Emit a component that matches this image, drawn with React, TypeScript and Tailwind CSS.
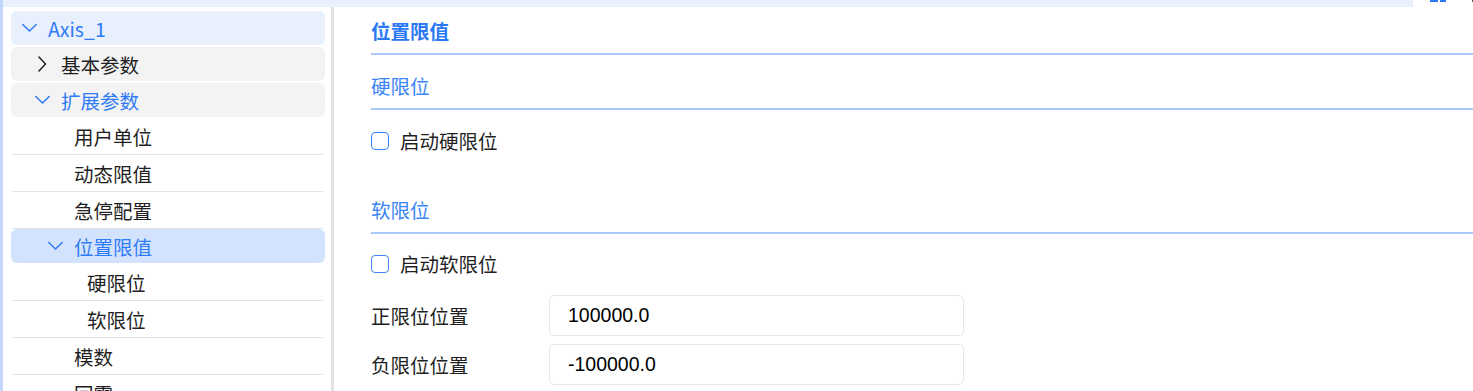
import { ReactNode } from 'react';

type Row = {
  label: string;
  level: number;
  icon: 'down' | 'right' | 'none';
  kind: 'axis' | 'group' | 'groupOpen' | 'active' | 'plain';
  gap?: string;
};

const rows: Row[] = [
  { label: 'Axis_1', level: 0, icon: 'down', kind: 'axis', gap: 'mb-[2px]' },
  { label: '基本参数', level: 1, icon: 'right', kind: 'group', gap: 'mb-[2px]' },
  { label: '扩展参数', level: 1, icon: 'down', kind: 'groupOpen', gap: 'mb-px' },
  { label: '用户单位', level: 2, icon: 'none', kind: 'plain' },
  { label: '动态限值', level: 2, icon: 'none', kind: 'plain' },
  { label: '急停配置', level: 2, icon: 'none', kind: 'plain' },
  { label: '位置限值', level: 2, icon: 'down', kind: 'active', gap: 'mb-px' },
  { label: '硬限位', level: 3, icon: 'none', kind: 'plain' },
  { label: '软限位', level: 3, icon: 'none', kind: 'plain' },
  { label: '模数', level: 2, icon: 'none', kind: 'plain' },
  { label: '回零', level: 2, icon: 'none', kind: 'plain' },
];

const indent = ['pl-[11px]', 'pl-[24px]', 'pl-[37px]', 'pl-[50px]'];
const plainIndent = ['pl-[10px]', 'pl-[23px]', 'pl-[36px]', 'pl-[49px]'];

function Chevron({ dir, color }: { dir: 'down' | 'right' | 'none'; color: string }) {
  if (dir === 'none') return <span className="w-4 shrink-0" />;
  return (
    <svg width="16" height="16" viewBox="0 0 16 16" className="shrink-0" fill="none" stroke={color} strokeWidth="1.5" strokeLinecap="round" strokeLinejoin="round">
      {dir === 'down' ? <polyline points="0.8,4.5 7.5,11 14.2,4.5" /> : <polyline points="4,1 10.5,8 4,15" />}
    </svg>
  );
}

function TreeRow({ row }: { row: Row }) {
  const blue = row.kind === 'axis' || row.kind === 'groupOpen' || row.kind === 'active';
  const bg =
    row.kind === 'axis' ? 'bg-[#e8f0fe] rounded-[6px] h-[34px]'
    : row.kind === 'active' ? 'bg-[#d3e3fd] rounded-[6px] h-[34px]'
    : row.kind === 'plain' ? 'h-[37px] border-b border-[#e4e4e4] ml-px mr-[2px]'
    : 'bg-[#f3f3f3] rounded-[6px] h-[34px]';
  const pad = row.kind === 'plain' ? plainIndent[row.level] : indent[row.level];
  return (
    <div className={`flex items-center gap-[10px] ${bg} ${pad} ${row.gap ?? ''}`}>
      <Chevron dir={row.icon} color={blue ? '#2f7bf6' : '#222222'} />
      <span className={`pt-[2px] text-[19.5px] leading-[28px] ${blue ? 'text-[#2f7bf6]' : 'text-[#1f1f1f]'}`}>{row.label}</span>
    </div>
  );
}

function Section({ title, bold, className }: { title: string; bold?: boolean; className: string }) {
  return (
    <div className={`border-b-2 border-[#a9c9fb] pb-[8px] ${className}`}>
      <div className={`text-[19.5px] leading-[28px] ${bold ? 'font-bold text-[#2a78f4]' : 'text-[#3a85f6]'}`}>{title}</div>
    </div>
  );
}

function Check({ label, className }: { label: string; className: string }) {
  return (
    <label className={`flex h-[28px] items-center gap-[11px] ${className}`}>
      <span className="h-[18px] w-[18px] rounded-[4px] border-[1.5px] border-[#3b82f6] bg-white" />
      <span className="text-[19.5px] leading-[28px] text-[#1f1f1f]">{label}</span>
    </label>
  );
}

function Field({ label, value, className }: { label: string; value: string; className: string }): ReactNode {
  return (
    <div className={`flex items-center ${className}`}>
      <span className="w-[178px] text-[19.5px] leading-[28px] text-[#1f1f1f]">{label}</span>
      <div className="flex h-[41px] w-[415px] items-center rounded-[5px] border border-[#e6e6e6] pl-[18px] font-['Liberation_Sans',Arial,sans-serif] text-[19.5px] text-black">
        {value}
      </div>
    </div>
  );
}

export default function App() {
  return (
    <div className="flex h-[391px] w-[1473px] overflow-hidden bg-white font-['Noto_Sans_CJK_SC','Noto_Sans',sans-serif]">
      <div className="w-[3px] shrink-0 bg-[#c2d7fb]" />
      <div className="flex min-w-0 flex-1 flex-col">
        <div className="flex h-[7px] shrink-0">
          <div className="flex-1 bg-[#e8f0fe]" />
          <div className="relative w-[60px]">
            <span className="absolute left-[17px] top-0 h-[2px] w-[8px] bg-[#2f7bf6]" />
            <span className="absolute left-[27px] top-0 h-[2px] w-[6px] bg-[#2f7bf6]" />
            <span className="absolute right-0 top-0 h-[2px] w-px bg-[#555]" />
          </div>
        </div>
        <div className="flex min-h-0 flex-1">
          <aside className="w-[328px] shrink-0 pl-[8px] pr-[6px] pt-[4px]">
            {rows.map((r) => (
              <TreeRow key={r.label} row={r} />
            ))}
          </aside>
          <div className="w-[3px] shrink-0 bg-[#e1e1e1]" />
          <main className="flex-1 pl-[37px]">
            <Section title="位置限值" bold className="pt-[10px]" />
            <Section title="硬限位" className="pt-[17px]" />
            <Check label="启动硬限位" className="mt-[17px]" />
            <Section title="软限位" className="pt-[41px]" />
            <Check label="启动软限位" className="mt-[16px]" />
            <Field label="正限位位置" value="100000.0" className="mt-[17px]" />
            <Field label="负限位位置" value="-100000.0" className="mt-[8px]" />
          </main>
        </div>
      </div>
    </div>
  );
}
